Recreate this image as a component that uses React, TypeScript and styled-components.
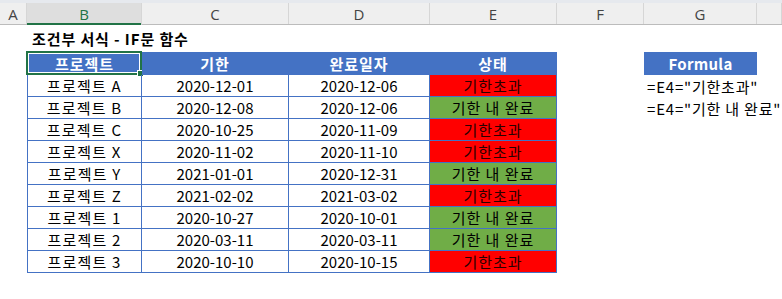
import React from "react";
import styled, { createGlobalStyle } from "styled-components";

const Global = createGlobalStyle`
  html, body { margin: 0; padding: 0; background: #ffffff; }
  body { font-family: "Noto Sans CJK KR", "Noto Sans", sans-serif; }
`;

const BLUE = "#4472c4";
const GREEN = "#217346";

const COLS = [27, 115, 147, 141, 127, 87, 113, 25];

const Sheet = styled.div`
  width: 782px;
  height: 299px;
  overflow: hidden;
  background: #ffffff;
  display: flex;
  flex-direction: column;
`;

const TopStrip = styled.div`
  height: 3px;
  background: #e6e9ee;
`;

const HeaderBar = styled.div`
  display: flex;
  height: 21px;
  background: #efefef;
  border-bottom: 1px solid #bcbcbc;
`;

const ColHead = styled.div<{ $w: number; $active?: boolean }>`
  width: ${(p) => p.$w}px;
  flex: none;
  box-sizing: border-box;
  display: flex;
  align-items: center;
  justify-content: center;
  font-family: "Open Sans", "Noto Sans", sans-serif;
  font-size: 15px;
  color: ${(p) => (p.$active ? GREEN : "#444444")};
  background: ${(p) => (p.$active ? "#dedede" : "transparent")};
  border-right: 1px solid #d6d6d6;
  box-shadow: ${(p) => (p.$active ? `inset 0 -2px 0 ${GREEN}` : "none")};
  margin-bottom: ${(p) => (p.$active ? "-1px" : "0")};
`;

const TitleRow = styled.div`
  height: 27px;
  display: flex;
  align-items: center;
  padding-left: 32px;
  padding-bottom: 1px;
  box-sizing: border-box;
  font-size: 15px;
  font-weight: 700;
  color: #000000;
  letter-spacing: 0.9px;
`;

const Row = styled.div<{ $h: number }>`
  display: flex;
  height: ${(p) => p.$h}px;
  flex: none;
`;

type Kind = "blank" | "head" | "data" | "late" | "ok" | "formula";

const Cell = styled.div<{
  $w: number;
  $kind: Kind;
  $first?: boolean;
  $boxed?: boolean;
  $ls?: number;
}>`
  position: relative;
  width: ${(p) => p.$w}px;
  flex: none;
  box-sizing: border-box;
  display: flex;
  align-items: center;
  justify-content: ${(p) => (p.$kind === "formula" ? "flex-start" : "center")};
  padding-left: ${(p) => (p.$kind === "formula" ? "3px" : "0")};
  white-space: nowrap;
  overflow: visible;
  font-size: 15px;
  letter-spacing: ${(p) => p.$ls ?? 0}px;
  font-weight: ${(p) => (p.$kind === "head" ? 700 : 400)};
  color: ${(p) =>
    p.$kind === "head" ? "#ffffff" : p.$kind === "late" ? "#2a0000" : "#000000"};
  background: ${(p) =>
    p.$kind === "head"
      ? BLUE
      : p.$kind === "late"
      ? "#ff0000"
      : p.$kind === "ok"
      ? "#70ad47"
      : "transparent"};
  border-right: ${(p) => (p.$boxed ? `1px solid ${BLUE}` : "none")};
  border-left: ${(p) => (p.$boxed && p.$first ? `1px solid ${BLUE}` : "none")};
  border-bottom: ${(p) => (p.$boxed ? `1px solid ${BLUE}` : "none")};
`;

const Selection = styled.div`
  position: absolute;
  left: -2px;
  top: -1px;
  right: -1px;
  bottom: -1px;
  border: 2px solid ${GREEN};
  box-shadow: inset 0 0 0 1px #ffffff;
  pointer-events: none;
`;

const Handle = styled.div`
  position: absolute;
  right: -4px;
  bottom: -4px;
  width: 5px;
  height: 5px;
  background: ${GREEN};
  border: 1px solid #ffffff;
`;

type Rec = { name: string; due: string; done: string; late: boolean };

const DATA: Rec[] = [
  { name: "프로젝트 A", due: "2020-12-01", done: "2020-12-06", late: true },
  { name: "프로젝트 B", due: "2020-12-08", done: "2020-12-06", late: false },
  { name: "프로젝트 C", due: "2020-10-25", done: "2020-11-09", late: true },
  { name: "프로젝트 X", due: "2020-11-02", done: "2020-11-10", late: true },
  { name: "프로젝트 Y", due: "2021-01-01", done: "2020-12-31", late: false },
  { name: "프로젝트 Z", due: "2021-02-02", done: "2021-03-02", late: true },
  { name: "프로젝트 1", due: "2020-10-27", done: "2020-10-01", late: false },
  { name: "프로젝트 2", due: "2020-03-11", done: "2020-03-11", late: false },
  { name: "프로젝트 3", due: "2020-10-10", done: "2020-10-15", late: true },
];

const FORMULAS = ['=E4="기한초과"', '=E4="기한 내 완료"'];

const LETTERS = ["A", "B", "C", "D", "E", "F", "G", ""];

export default function App() {
  return (
    <>
      <Global />
      <Sheet>
        <TopStrip />
        <HeaderBar>
          {LETTERS.map((l, i) => (
            <ColHead key={i} $w={COLS[i]} $active={l === "B"}>
              {l}
            </ColHead>
          ))}
        </HeaderBar>
        <TitleRow>조건부 서식 - IF문 함수</TitleRow>
        <Row $h={23}>
          <Cell $w={COLS[0]} $kind="blank" />
          <Cell $w={COLS[1]} $kind="head" $boxed $first $ls={1}>
            프로젝트
            <Selection>
              <Handle />
            </Selection>
          </Cell>
          <Cell $w={COLS[2]} $kind="head" $boxed $ls={1}>
            기한
          </Cell>
          <Cell $w={COLS[3]} $kind="head" $boxed $ls={1}>
            완료일자
          </Cell>
          <Cell $w={COLS[4]} $kind="head" $boxed $ls={1}>
            상태
          </Cell>
          <Cell $w={COLS[5]} $kind="blank" />
          <Cell $w={COLS[6]} $kind="head" $ls={0.3}>
            Formula
          </Cell>
        </Row>
        {DATA.map((r, i) => (
          <Row key={r.name} $h={22}>
            <Cell $w={COLS[0]} $kind="blank" />
            <Cell $w={COLS[1]} $kind="data" $boxed $first $ls={1.2}>
              {r.name}
            </Cell>
            <Cell $w={COLS[2]} $kind="data" $boxed>
              {r.due}
            </Cell>
            <Cell $w={COLS[3]} $kind="data" $boxed>
              {r.done}
            </Cell>
            <Cell $w={COLS[4]} $kind={r.late ? "late" : "ok"} $boxed $ls={1}>
              {r.late ? "기한초과" : "기한 내 완료"}
            </Cell>
            <Cell $w={COLS[5]} $kind="blank" />
            <Cell $w={COLS[6]} $kind="formula" $ls={0.8}>
              {FORMULAS[i] ?? ""}
            </Cell>
          </Row>
        ))}
      </Sheet>
    </>
  );
}
